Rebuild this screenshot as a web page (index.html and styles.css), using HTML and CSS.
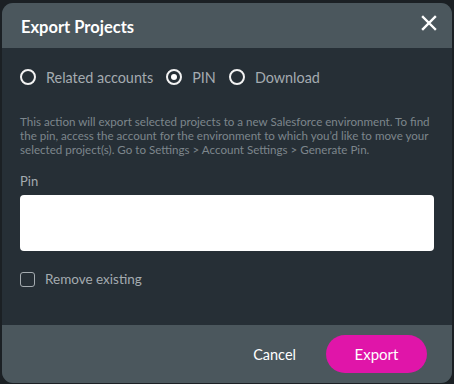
FILE: index.html
```html
<!DOCTYPE html>
<html>
<head>
<meta charset="utf-8">
<link rel="stylesheet" href="styles.css">
</head>
<body>
<div class="dialog">
  <div class="header">
    <h1 class="title">Export Projects</h1>
    <svg class="close" width="16" height="16" viewBox="0 0 16 16"><path d="M2 2 L14 14 M14 2 L2 14" stroke="#fff" stroke-width="2.4" stroke-linecap="square"/></svg>
  </div>
  <div class="body">
    <div class="radios">
      <label class="radio"><span class="circle"></span>Related accounts</label>
      <label class="radio"><span class="circle on"></span>PIN</label>
      <label class="radio"><span class="circle"></span>Download</label>
    </div>
    <p class="desc">This action will export selected projects to a new Salesforce environment. To find the pin, access the account for the environment to which you’d like to move your selected project(s). Go to Settings &gt; Account Settings &gt; Generate Pin.</p>
    <div class="label">Pin</div>
    <div class="input"></div>
    <label class="check"><span class="box"></span>Remove existing</label>
  </div>
  <div class="footer">
    <span class="cancel">Cancel</span>
    <span class="export">Export</span>
  </div>
</div>
</body>
</html>
```
FILE: styles.css
```css
html, body { margin: 0; padding: 0; }
body {
  background: #1b2024;
  font-family: Lato, "Open Sans", sans-serif;
  width: 454px;
  height: 384px;
  overflow: hidden;
}
.dialog {
  margin: 3px 2px 0 2px;
  width: 450px;
  height: 380px;
  border-radius: 11px;
  overflow: hidden;
  background: #262f36;
  display: flex;
  flex-direction: column;
}
.header {
  background: #4b575d;
  height: 45px;
  display: flex;
  align-items: center;
  justify-content: space-between;
  padding: 0 15px 0 19px;
  flex-shrink: 0;
}
.title {
  margin: 0;
  color: #fff;
  font-size: 16.5px;
  font-weight: 700;
  position: relative;
  top: 1px;
}
.close { position: relative; top: -3px; }
.body {
  flex: 1;
  padding: 0 18px 0 18px;
}
.radios {
  display: flex;
  gap: 13px;
  margin-top: 18px;
  height: 22px;
  align-items: center;
}
.radio {
  display: flex;
  align-items: center;
  color: #a4abb0;
  font-size: 14.4px;
}
.circle {
  width: 12px;
  height: 12px;
  border: 2px solid #f2f2f2;
  border-radius: 50%;
  margin-right: 10px;
  display: flex;
  align-items: center;
  justify-content: center;
}
.circle.on::after {
  content: "";
  width: 6px;
  height: 6px;
  border-radius: 50%;
  background: #fff;
}
.desc {
  margin: 27px 0 0 0;
  color: #7d868c;
  font-size: 11.6px;
  line-height: 14px;
  width: 420px;
}
.label {
  margin-top: 16px;
  color: #a4abb0;
  font-size: 13px;
  line-height: 16px;
}
.input {
  margin-top: 6px;
  height: 56px;
  width: 414px;
  background: #fff;
  border-radius: 4px;
}
.check {
  display: flex;
  align-items: center;
  margin-top: 20px;
  color: #a4abb0;
  font-size: 13.5px;
}
.box {
  width: 13px;
  height: 13px;
  border: 1.5px solid #a4abb0;
  border-radius: 3px;
  margin-right: 10px;
}
.footer {
  background: #4b575d;
  height: 58px;
  flex-shrink: 0;
  display: flex;
  align-items: center;
  justify-content: flex-end;
  padding-right: 25px;
  gap: 30px;
}
.cancel {
  color: #fff;
  font-size: 14.5px;
}
.export {
  background: #e015a9;
  color: #fff;
  font-size: 15px;
  width: 101px;
  height: 38px;
  border-radius: 19px;
  display: flex;
  align-items: center;
  justify-content: center;
}
```
